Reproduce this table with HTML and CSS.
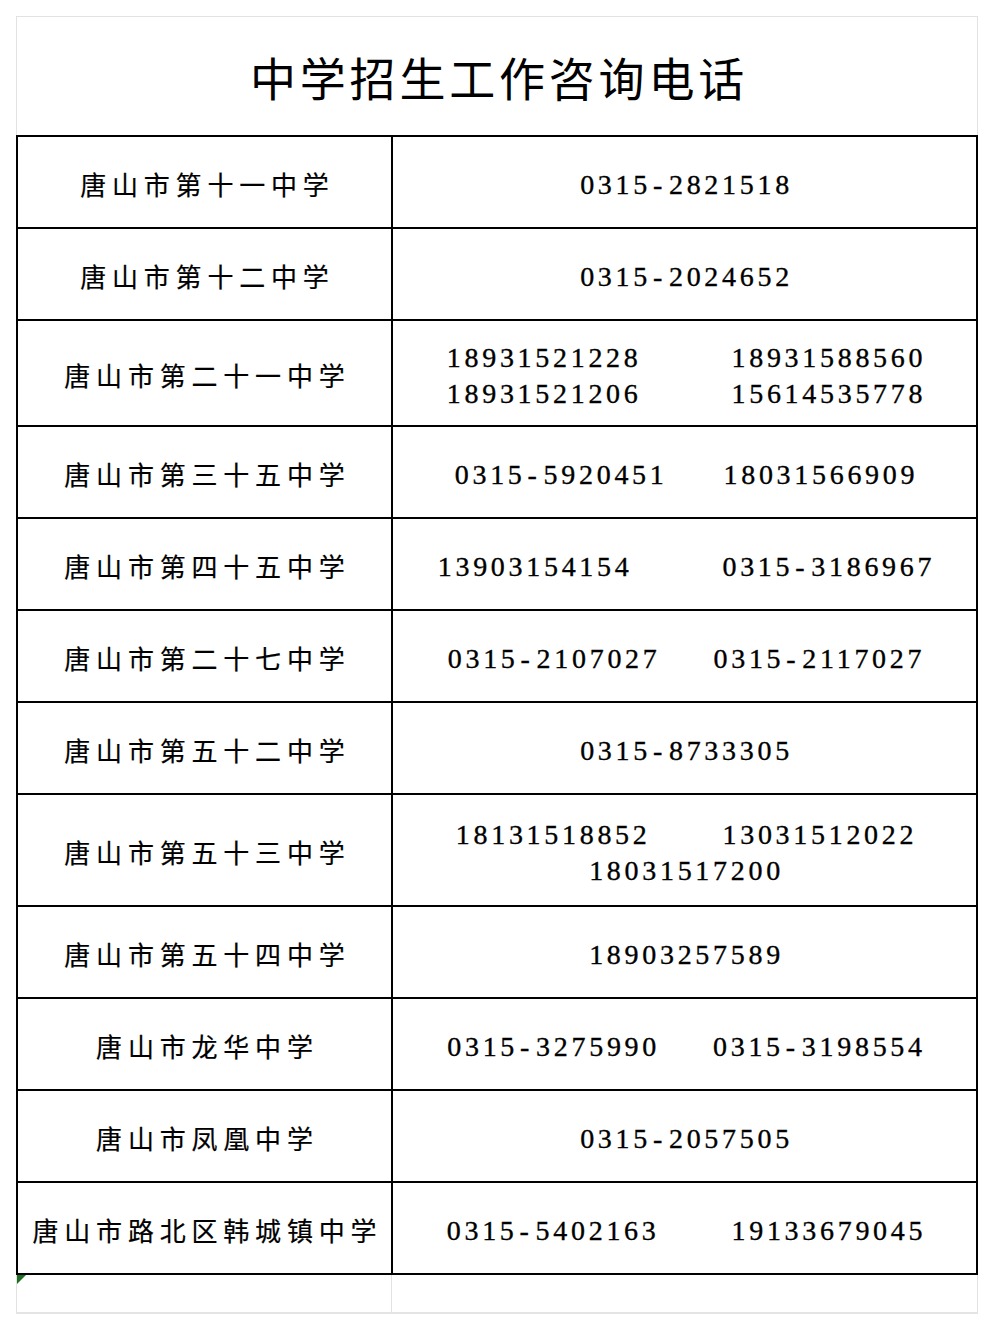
FILE: index.html
```html
<!DOCTYPE html>
<html lang="zh-CN">
<head>
<meta charset="utf-8">
<title>中学招生工作咨询电话</title>
<link rel="stylesheet" href="styles.css">
</head>
<body>
<div class="sheet">
  <div class="title-row">
    <h1 class="title">中学招生工作咨询电话</h1>
  </div>
  <div class="grid">
    <div class="name">唐山市第十一中学</div>
    <div class="phones"><div class="line"><span class="num">0315<span class="dash">-</span>2821518</span></div></div>

    <div class="name">唐山市第十二中学</div>
    <div class="phones"><div class="line"><span class="num">0315<span class="dash">-</span>2024652</span></div></div>

    <div class="name">唐山市第二十一中学</div>
    <div class="phones">
      <div class="line gap-l"><span class="num">18931521228</span><span class="num">18931588560</span></div>
      <div class="line gap-l"><span class="num">18931521206</span><span class="num">15614535778</span></div>
    </div>

    <div class="name">唐山市第三十五中学</div>
    <div class="phones"><div class="line gap-s2"><span class="num">0315<span class="dash">-</span>5920451</span><span class="num">18031566909</span></div></div>

    <div class="name">唐山市第四十五中学</div>
    <div class="phones"><div class="line gap-l"><span class="num">13903154154</span><span class="num">0315<span class="dash">-</span>3186967</span></div></div>

    <div class="name">唐山市第二十七中学</div>
    <div class="phones"><div class="line gap-s"><span class="num">0315<span class="dash">-</span>2107027</span><span class="num">0315<span class="dash">-</span>2117027</span></div></div>

    <div class="name">唐山市第五十二中学</div>
    <div class="phones"><div class="line"><span class="num">0315<span class="dash">-</span>8733305</span></div></div>

    <div class="name">唐山市第五十三中学</div>
    <div class="phones">
      <div class="line gap-m"><span class="num">18131518852</span><span class="num">13031512022</span></div>
      <div class="line"><span class="num">18031517200</span></div>
    </div>

    <div class="name">唐山市第五十四中学</div>
    <div class="phones"><div class="line"><span class="num">18903257589</span></div></div>

    <div class="name">唐山市龙华中学</div>
    <div class="phones"><div class="line gap-s"><span class="num">0315<span class="dash">-</span>3275990</span><span class="num">0315<span class="dash">-</span>3198554</span></div></div>

    <div class="name">唐山市凤凰中学</div>
    <div class="phones"><div class="line"><span class="num">0315<span class="dash">-</span>2057505</span></div></div>

    <div class="name">唐山市路北区韩城镇中学</div>
    <div class="phones"><div class="line gap-m"><span class="num">0315<span class="dash">-</span>5402163</span><span class="num">19133679045</span></div></div>
  </div>
  <div class="foot-row">
    <div class="foot-cell first"><span class="marker"></span></div>
    <div class="foot-cell"></div>
  </div>
</div>
</body>
</html>
```

FILE: styles.css
```css
html, body {
  margin: 0;
  padding: 0;
  background: #ffffff;
}

.sheet {
  width: 962px;
  margin: 16px 0 0 16px;
  color: #000;
}

.title-row {
  height: 118px;
  border: 1px solid #e2e2e2;
  border-bottom: none;
  display: flex;
  align-items: center;
  justify-content: center;
}

.title {
  margin: 0;
  padding: 0 0 0 4px;
  font-family: "Noto Sans CJK SC", "Noto Sans", sans-serif;
  font-weight: 400;
  font-size: 46px;
  letter-spacing: 3.8px;
  line-height: 1;
}

.grid {
  display: grid;
  grid-template-columns: 373px 583px;
  grid-template-rows: 90px 90px 104px 90px 90px 90px 90px 110px 90px 90px 90px 90px;
  gap: 2px;
  padding: 2px;
  background: #000;
}

.name,
.phones {
  background: #fff;
  display: flex;
  flex-direction: column;
  align-items: center;
  justify-content: center;
}

.name {
  font-family: "Noto Sans CJK SC", "Noto Sans", sans-serif;
  font-size: 26px;
  letter-spacing: 5.8px;
  padding: 4px 0 0 5.8px;
  line-height: 1;
  -webkit-text-stroke: 0.2px #000;
}

.phones {
  font-family: "Liberation Serif", "Times New Roman", serif;
  font-size: 28px;
  letter-spacing: 3.7px;
  line-height: 36px;
  padding: 6px 0 0 4px;
  -webkit-text-stroke: 0.35px #000;
}

.dash {
  display: inline-block;
  padding: 0 3px 0 2px;
}

.line {
  display: flex;
  justify-content: center;
}

.gap-s { column-gap: 53px; }
.gap-s2 { column-gap: 56px; }
.gap-m { column-gap: 72px; }
.gap-l { column-gap: 90px; }

.foot-row {
  display: grid;
  grid-template-columns: 375px 1fr;
  height: 37px;
  border-left: 1px solid #e2e2e2;
  border-right: 1px solid #e2e2e2;
  border-bottom: 2px solid #e4e4e4;
}

.foot-cell {
  position: relative;
}

.foot-cell.first {
  border-right: 1px solid #e2e2e2;
}

.marker {
  position: absolute;
  left: 0;
  top: 0;
  width: 0;
  height: 0;
  border-top: 9px solid #1f6e22;
  border-right: 9px solid transparent;
}
```
